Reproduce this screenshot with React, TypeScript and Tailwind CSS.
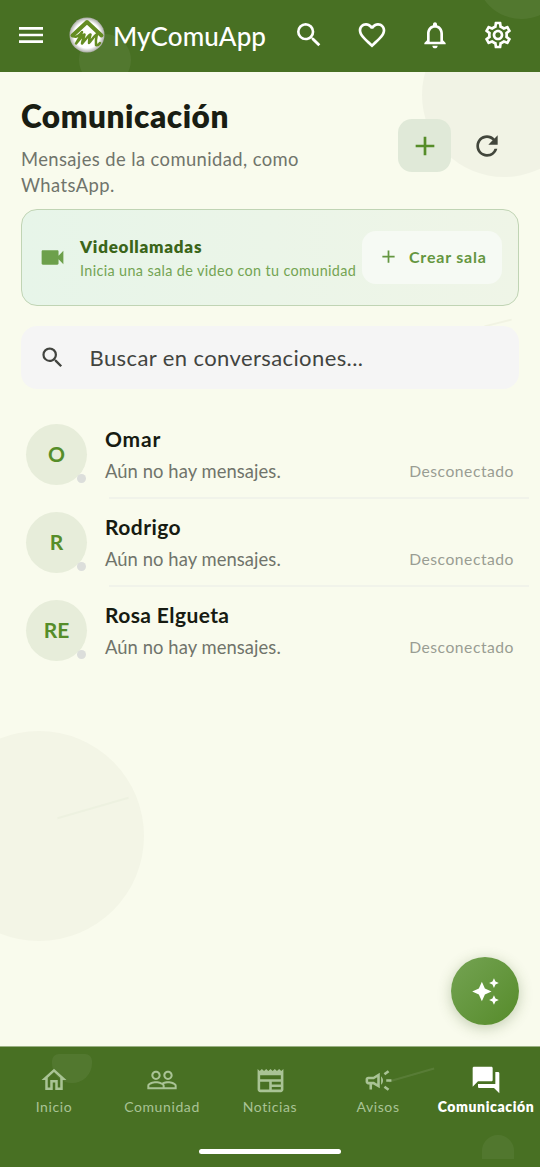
import type { IconType } from "react-icons";
import {
    MdAdd,
    MdAutoAwesome,
    MdFavoriteBorder,
    MdForum,
    MdMenu,
    MdNotificationsNone,
    MdOutlineCampaign,
    MdOutlineHome,
    MdOutlineNewspaper,
    MdOutlineSettings,
    MdPeopleOutline,
    MdRefresh,
    MdSearch,
    MdVideocam,
} from "react-icons/md";

const chats = [
    { name: "Omar", initials: "O", spacing: "tracking-[0.8px]" },
    { name: "Rodrigo", initials: "R", spacing: "tracking-[0.45px]" },
    { name: "Rosa Elgueta", initials: "RE", spacing: "tracking-[0.4px]" },
];

const tabs: { label: string; icon: IconType; size: number; active?: boolean }[] = [
    { label: "Inicio", icon: MdOutlineHome, size: 30 },
    { label: "Comunidad", icon: MdPeopleOutline, size: 32 },
    { label: "Noticias", icon: MdOutlineNewspaper, size: 31 },
    { label: "Avisos", icon: MdOutlineCampaign, size: 31 },
    { label: "Comunicación", icon: MdForum, size: 32, active: true },
];

function Logo() {
    return (
        <svg viewBox="0 0 36 36" className="h-9 w-9 shrink-0">
            <defs>
                <radialGradient id="disc">
                    <stop offset="0.75" stopColor="#ffffff" />
                    <stop offset="1" stopColor="#a9aaa4" />
                </radialGradient>
            </defs>
            <circle cx="18" cy="18" r="17.5" fill="url(#disc)" />
            <g fill="none" stroke="#648c22" strokeLinecap="round" strokeLinejoin="round">
                <path d="M3.5 18.5L18 5l14.500 13.500" strokeWidth="4" />
                <path
                    d="M5 19.500c2 1 5-1 8-4.500-1 4-4 7.500-6 11.500 4-4 6-8 8.500-9-.5 3-2 5.500-2.500 9 4-4 6-8 8.500-9-1 3-1.500 5.500-1.500 8.500 3-3.500 5-7 8-9-1 4-1.500 7-1 11 1.500.5 3-.5 4-2"
                    strokeWidth="2.500"
                />
            </g>
        </svg>
    );
}

function Header() {
    return (
        <header className="relative flex h-[72px] items-center overflow-hidden bg-[#487023] text-white">
            <div className="absolute -top-[72px] left-[476px] h-[91px] w-[91px] rounded-full bg-white/[0.06]" />
            <div className="absolute left-[79px] top-[34px] h-[52px] w-[52px] rounded-full bg-white/[0.06]" />
            <div className="relative flex w-full items-center">
                <MdMenu size={32} className="ml-[15px] shrink-0 -translate-y-px" />
                <div className="ml-[21.5px] -translate-y-px">
                    <Logo />
                </div>
                <h1 className="ml-[8.5px] w-[153px] whitespace-nowrap text-[26px] font-medium leading-8 tracking-[0.1px]">
                    MyComuApp
                </h1>
                <div className="ml-[27px] flex -translate-y-px gap-[31px]">
                    <MdSearch size={32} />
                    <MdFavoriteBorder size={32} />
                    <MdNotificationsNone size={32} />
                    <MdOutlineSettings size={32} />
                </div>
            </div>
        </header>
    );
}

function VideoCard() {
    return (
        <section className="mt-[9px] flex h-[97px] items-center rounded-[16px] border border-[#c0d4b4] bg-linear-to-r from-[#e7f5e9] to-[#eff5e7] pl-[16px] pr-4">
            <MdVideocam size={29} className="shrink-0 text-[#6da04b]" />
            <div className="ml-[13px] w-[282px] whitespace-nowrap">
                <h3 className="text-[17px] font-extrabold leading-[26px] tracking-[0.75px] text-[#3b6519]">
                    Videollamadas
                </h3>
                <p className="text-[14.4px] leading-[22px] tracking-[0.36px] text-[#74a453]">
                    Inicia una sala de video con tu comunidad
                </p>
            </div>
            <button className="flex h-[53px] w-[140px] shrink-0 items-center rounded-[14px] bg-[#f6faf4] pl-4 text-[#649640]">
                <MdAdd size={21} className="-translate-y-px" />
                <span className="ml-[10px] -translate-y-px whitespace-nowrap text-[16px] font-bold tracking-[0.8px]">
                    Crear sala
                </span>
            </button>
        </section>
    );
}

function ChatList() {
    return (
        <ul className="mt-[21px]">
            {chats.map((chat, i) => (
                <li key={chat.name} className="relative flex h-[88px] items-center pl-[5px] pr-[5px]">
                    <div className="relative flex h-[61px] w-[61px] shrink-0 items-center justify-center rounded-full bg-[#e7edda] text-[21px] font-bold text-[#568d29]">
                        {chat.initials}
                        <span className="absolute bottom-[2px] right-[1px] h-[9px] w-[9px] rounded-full bg-[#dcdedb]" />
                    </div>
                    <div className="ml-[18px] grow">
                        <h3 className={`text-[21px] font-bold leading-[33px] text-[#171b12] ${chat.spacing}`}>
                            {chat.name}
                        </h3>
                        <div className="flex items-center justify-between leading-8">
                            <p className="text-[18.4px] tracking-[0.07px] text-[#70746b]">Aún no hay mensajes.</p>
                            <span className="text-[15.7px] tracking-[0.5px] text-[#999d93]">Desconectado</span>
                        </div>
                    </div>
                    {i < chats.length - 1 && (
                        <div className="absolute -bottom-px -right-[10px] left-[88px] h-[2px] bg-[#f1f3ea]" />
                    )}
                </li>
            ))}
        </ul>
    );
}

function BottomNav() {
    return (
        <nav className="relative h-[121px] shrink-0 overflow-hidden border-t border-[#9bb083] bg-[#487023]">
            <div className="absolute left-[52px] top-[7px] h-[29px] w-[40px] rounded-b-[20px] rounded-t-[7px] bg-white/[0.06]" />
            <div className="absolute left-[482px] top-[88px] h-[24px] w-[32px] rounded-t-full bg-white/[0.05]" />
            <div className="absolute left-[388px] top-[27px] h-[2px] w-[47px] -rotate-[16deg] bg-white/[0.09]" />
            <div className="relative grid grid-cols-5 pt-[17px]">
                {tabs.map(({ label, icon: Icon, size, active }) => (
                    <div
                        key={label}
                        className={`flex flex-col items-center whitespace-nowrap text-[14px] ${
                            active ? "font-extrabold tracking-[0.6px] text-white" : "tracking-[0.6px] text-[#a9c395]"
                        }`}
                    >
                        <div className="flex h-8 items-center">
                            <Icon size={size} />
                        </div>
                        <span className="leading-[22px]">{label}</span>
                    </div>
                ))}
            </div>
            <div className="absolute left-[199px] top-[102px] h-[5px] w-[142px] rounded-full bg-white" />
        </nav>
    );
}

export default function App() {
    return (
        <div className="flex h-[1167px] w-[540px] flex-col overflow-hidden bg-[#f9fbed] font-['Lato','Liberation_Sans',sans-serif]">
            <Header />
            <main className="relative grow overflow-hidden px-[21px]">
                <div className="absolute -top-[59px] left-[422px] h-[164px] w-[164px] rounded-full bg-[#f1f3e5]" />
                <div className="absolute -left-[66px] top-[659px] h-[210px] w-[210px] rounded-full bg-[#f3f5e6]" />
                <div className="absolute left-[56px] top-[735px] h-[2px] w-[74px] -rotate-[16deg] bg-[#edf1e0]" />
                <div className="absolute left-[484px] top-[250px] h-[2px] w-[28px] -rotate-[14deg] bg-[#f1f3e3]" />
                <div className="relative">
                    <div className="flex h-[128px] items-start pt-[25px]">
                        <div className="w-[377px] shrink-0">
                            <h2 className="text-[31.5px] font-extrabold leading-[38px] tracking-[0.55px] text-[#191d13]">
                                Comunicación
                            </h2>
                            <p className="mt-[11px] w-[300px] text-[18.4px] leading-[26px] tracking-[0.4px] text-[#70746b]">
                                Mensajes de la comunidad, como WhatsApp.
                            </p>
                        </div>
                        <button className="mt-[22px] flex h-[53px] w-[53px] items-center justify-center rounded-[14px] bg-[#e0e9d8] text-[#568d29]">
                            <MdAdd size={32} />
                        </button>
                        <button className="ml-[20px] mt-[33px]">
                            <MdRefresh size={32} className="text-[#42463c]" />
                        </button>
                    </div>
                    <VideoCard />
                    <div className="mt-5 flex h-[63px] items-center rounded-[16px] bg-[#f5f5f5] pl-[18px] text-[#42443f]">
                        <MdSearch size={27} />
                        <span className="ml-[23.5px] text-[22px] tracking-[0.4px]">Buscar en conversaciones...</span>
                    </div>
                    <ChatList />
                </div>
                <button className="absolute bottom-[21px] right-[21px] flex h-[68px] w-[68px] items-center justify-center rounded-full bg-linear-to-br from-[#74a352] to-[#568b29] text-white shadow-[0_3px_14px_rgba(70,100,40,0.3)]">
                    <MdAutoAwesome size={29} />
                </button>
            </main>
            <BottomNav />
        </div>
    );
}
